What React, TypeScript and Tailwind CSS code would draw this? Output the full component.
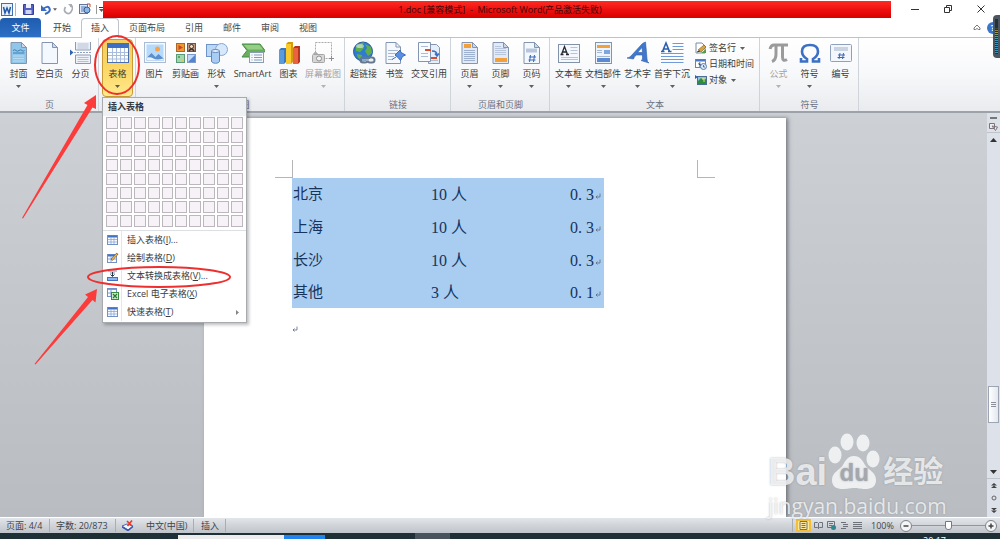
import React from 'react';
import clsx from 'clsx';

type IconProps = { children: React.ReactNode; w?: number; h?: number };

const Svg: React.FC<IconProps> = ({ children, w = 24, h = 24 }) => (
  <svg width={w} height={h} viewBox={`0 0 ${w} ${h}`} fill="none" aria-hidden="true" className="shrink-0">
    {children}
  </svg>
);

/* Blank sheet with a folded corner, shared by many icons */
const Sheet: React.FC<{ fill?: string }> = ({ fill = '#f3f8fe' }) => (
  <>
    <path d="M4 1.5h10.5l5 5V22.500H4z" fill={fill} stroke="#8495b2" />
    <path d="M14.500 1.500v5h5z" fill="#cbd8ea" stroke="#8495b2" strokeLinejoin="round" />
  </>
);

const CoverIcon = () => (
  <Svg>
    <Sheet fill="#8fc6ea" />
    <path d="M6 15h11M6 17.500h11M6 20h11" stroke="#b9dcf3" />
    <path d="M6 9.500q2-1.500 3 0t3 0 3 0 2.500 0M6 12h11.500" stroke="#3f7fb5" />
  </Svg>
);

const BlankIcon = () => (
  <Svg>
    <Sheet />
  </Svg>
);

const BreakIcon = () => (
  <Svg>
    <path d="M6.500 1v8h15V1" fill="#eef2f8" stroke="#8c9ab2" />
    <path d="M6.500 22.500V14h15v8.500z" fill="#eef2f8" stroke="#8c9ab2" />
    <path d="M8.500 3h11M8.500 5h11M8.500 7h11M8.500 16.500h11M8.500 18.500h11M8.500 20.500h11" stroke="#b4c0d4" />
    <path d="M5 11.500h18" stroke="#8aa0c8" strokeDasharray="2 1" />
    <path d="M1 8.500l3.500 3L1 14.500z" fill="#2f62b5" />
  </Svg>
);

const TableIcon = () => (
  <Svg>
    <rect x="1.500" y="2.500" width="21" height="19" fill="#fbfdff" stroke="#4a6fae" />
    <rect x="2" y="3" width="20" height="4" fill="#3f6fc4" />
    <path d="M2 11.500h20M2 14.500h20M2 18h20M6.500 7v14M10.500 7v14M14.500 7v14M18.500 7v14" stroke="#a9bcdc" />
  </Svg>
);

const PictureIcon = () => (
  <Svg>
    <rect x="1.500" y="1.500" width="21" height="20" fill="#f4f9ff" stroke="#a9bcd4" />
    <rect x="3.500" y="3.500" width="17" height="16" fill="#b6dafa" />
    <circle cx="14.500" cy="8" r="2.500" fill="#f6a44c" />
    <path d="M3.500 17l5-5 4 4 3-3 5 4.500v2h-17z" fill="#5d8fce" />
    <path d="M3.500 19.500v-3q4-1 7 1t10 0v2z" fill="#e9f3fd" />
  </Svg>
);

const ClipArtIcon = () => (
  <Svg>
    <rect x="2.500" y="2.500" width="8" height="8" fill="#f09a2e" stroke="#b0662a" />
    <path d="M4.500 4l4.500 2.500-4.500 2.500z" fill="#c8432a" />
    <rect x="13.500" y="2.500" width="8" height="8" fill="#b99a84" stroke="#6a564b" />
    <circle cx="17.500" cy="5.500" r="2" fill="#f6d9bf" stroke="#3d302a" />
    <path d="M15 10q2.500-4 5 0" stroke="#3d302a" strokeWidth="1.500" />
    <rect x="2.500" y="13.500" width="8" height="8" fill="#a5d6b0" stroke="#5b9a76" />
    <circle cx="5" cy="16" r="1" fill="#3a9848" />
    <circle cx="8" cy="19" r="1" fill="#e8ce44" />
    <rect x="13.500" y="13.500" width="8" height="8" fill="#c2d9f8" stroke="#7c99cb" />
    <path d="M14 21l7-7v7z" fill="#5483cf" />
  </Svg>
);

const ShapesIcon = () => (
  <Svg>
    <rect x="1.500" y="3.500" width="12" height="12" fill="#bad7f5" stroke="#6f94c8" />
    <circle cx="16.500" cy="8.500" r="6" fill="#d7e8fa" stroke="#86a5d0" />
    <path d="M6.500 10v10c0 3 8 3 8 0V10" fill="#a9ccf2" stroke="#5f86c0" />
    <ellipse cx="10.500" cy="10" rx="4" ry="1.500" fill="#e6f1fd" stroke="#5f86c0" />
  </Svg>
);

const SmartArtIcon = () => (
  <Svg>
    <path d="M1 3h18l5 6.500-4 6.500H1l5-6.500z" fill="#68b05e" stroke="#4b8b48" />
    <path d="M3 4h15.500l3.500 4.500H7z" fill="#94cf84" />
    <rect x="8.500" y="11.500" width="14" height="10" fill="#f7fafd" stroke="#8b9bb0" />
    <path d="M10.500 14h1M13 14h8M10.500 16.500h1M13 16.500h8M10.500 19h1M13 19h8" stroke="#7f9cbd" />
  </Svg>
);

const ChartIcon = () => (
  <Svg>
    <path d="M2 9l2-2h5v14l-2 2H2z" fill="#3979c0" />
    <path d="M2 9h5v14H2z" fill="#5a9bdd" />
    <path d="M9 3l2-2h5v20l-2 2H9z" fill="#d49a10" />
    <path d="M9 3h5v20H9z" fill="#fac92d" />
    <path d="M16 7l2-2h5v16l-2 2h-5z" fill="#b9341c" />
    <path d="M16 7h5v16h-5z" fill="#ea6340" />
  </Svg>
);

const ScreenshotIcon = () => (
  <Svg>
    <rect x="4.500" y="1.500" width="16" height="16" stroke="#aaa" strokeDasharray="2 1" />
    <rect x="1.500" y="13.500" width="12" height="8" rx="1" fill="#d6d6d6" stroke="#a5a5a5" />
    <circle cx="8" cy="17.500" r="2.500" fill="#f4f4f4" stroke="#8d8d8d" />
    <path d="M3 13v-1h3v1M18 17.500h5M20.500 15v5" stroke="#8d8d8d" />
  </Svg>
);

const LinkIcon = () => (
  <Svg>
    <circle cx="11" cy="10.500" r="9.500" fill="#2f7bd0" stroke="#245a9c" />
    <path d="M4 6q4-5 8-4.500L10 5l2 2-4 4-4-1zM13 3l6 3 1 6-4 3-3-5 2-3zM5 13l5 1-1 5q-4-2-4-6z" fill="#5fb04c" />
    <ellipse cx="8" cy="5" rx="4" ry="2" fill="#fff" opacity=".5" />
    <rect x="8.500" y="16.500" width="7" height="5" rx="2.500" stroke="#66788f" strokeWidth="2" />
    <rect x="15.500" y="16.500" width="7" height="5" rx="2.500" stroke="#66788f" strokeWidth="2" />
    <path d="M10 19h11" stroke="#d9e2ec" />
  </Svg>
);

const BookmarkIcon = () => (
  <Svg>
    <path d="M3 1.500h10l4.500 4.500v16.500H3z" fill="#f5f9fe" stroke="#8495b2" />
    <path d="M13 1.500V6h4.500" stroke="#8495b2" />
    <path d="M5 9.500h10M5 12.500h8M5 15.500h6M5 18.500h5" stroke="#a9b9d2" />
    <path d="M9 18.500l4-2.500M12 14l5-5 1 2.500 4.500 2.500-3 1.500-2 4-2-2.500z" fill="#5b8fdf" stroke="#3a6cbf" />
  </Svg>
);

const CrossRefIcon = () => (
  <Svg>
    <path d="M11.500 3.500h8l3 3v16h-11z" fill="#e6eef9" stroke="#8495b2" />
    <path d="M1.500 1.500h12v19h-12z" fill="#f8fbff" stroke="#8495b2" />
    <path d="M4 5.500h7M4 12.500h7M4 15.500h7M14 19.500h7" stroke="#aebcd4" />
    <path d="M8 9h6M14 17h6" stroke="#dd4b28" strokeWidth="2" />
    <path d="M15 10q5 0 5 4M18 12.500l2 2.500 2-2.500" stroke="#3a6fc4" strokeWidth="1.500" />
  </Svg>
);

const HeaderIcon = () => (
  <Svg>
    <Sheet fill="#e1eaf6" />
    <rect x="6" y="3" width="7" height="4" fill="#f2a13a" />
    <path d="M6 9.500h11M6 11.500h11M6 13.500h11M6 15.500h11M6 17.500h11M6 19.500h11" stroke="#9db0ce" />
  </Svg>
);

const FooterIcon = () => (
  <Svg>
    <Sheet fill="#e1eaf6" />
    <path d="M6 5.500h6M6 7.500h11M6 9.500h11M6 11.500h11M6 13.500h11" stroke="#b7c5dd" />
    <rect x="6" y="17" width="12" height="4" fill="#f2a13a" />
  </Svg>
);

const PageNumberIcon = () => (
  <Svg>
    <Sheet />
    <path d="M6 8.500h11M6 10.500h11" stroke="#b7c5dd" strokeWidth="2" />
    <path d="M10.500 14l-1 7M14.500 14l-1 7M9 16h7M8.500 19h7" stroke="#3c69b5" />
  </Svg>
);

const TextBoxIcon = () => (
  <Svg>
    <rect x="1.500" y="3.500" width="21" height="18" fill="#f5f9fd" stroke="#8292a8" />
    <path d="M13.500 6.500h7M13.500 9.500h7M13.500 12.500h7M4 16.500h17M4 18.500h17" stroke="#b4c4da" />
    <path d="M4.500 13.500l3-8 3 8M5.500 11h4M3.500 13.500h3M9 13.500h3" stroke="#24292f" strokeWidth="1.300" />
  </Svg>
);

const QuickPartsIcon = () => (
  <Svg>
    <rect x="4.500" y="1.500" width="16" height="21" fill="#eef4fb" stroke="#8495b2" />
    <rect x="6" y="4" width="13" height="3" fill="#f2a13a" />
    <rect x="13" y="9" width="6" height="4" fill="#7ea5df" />
    <path d="M6 9.500h5M6 11.500h5M6 15.500h13" stroke="#a5b7d3" />
    <rect x="6" y="17" width="13" height="4" fill="#5c8ad2" />
  </Svg>
);

const WordArtIcon = () => (
  <Svg>
    <path
      d="M19.500 1q1 10 1.500 17 0 3 2 4l-8-2.500q2-.5 1.500-3V14h-6q-3 2-3 4l-6.500-1q2 0 4-2L16 3q1-1 3.500-2zM16 6.500l-4.500 5h5z"
      fill="#3f79cf"
      fillRule="evenodd"
      stroke="#2c5ba8"
      strokeWidth=".6"
    />
  </Svg>
);

const DropCapIcon = () => (
  <Svg>
    <path d="M12.500 2.500h11M12.500 5.500h11M12.500 8.500h11M1 12.500h22.500M1 15.500h22.500M1 18.500h22.500M1 21.500h22.500" stroke="#7099d8" />
    <path d="M2.500 10.500L6 2l3.500 8.500M3.500 8h5M1 10.500h3.500M8 10.500h3.500" stroke="#2c5fae" strokeWidth="1.600" />
  </Svg>
);

const PiIcon = () => (
  <Svg>
    <path d="M3 8q1-4 4-4h14M9 4v9q0 6-4 7.500M15.500 4v12q0 5 4.500 2.500" stroke="#9b9b9b" strokeWidth="3" />
  </Svg>
);

const OmegaIcon = () => (
  <Svg>
    <path
      d="M3 17v3.500h6V18q-5-3-5-7.500Q4 4 12 4t8 6.500Q20 15 15 18v2.500h6V17"
      stroke="#3c70c4"
      strokeWidth="2.600"
    />
  </Svg>
);

const NumberIcon = () => (
  <Svg>
    <rect x="1.500" y="3.500" width="21" height="17" rx="1" fill="#f3f7fc" stroke="#8fa1bd" />
    <rect x="5" y="6" width="14" height="4" fill="#c9d3e2" />
    <path d="M11 12l-1 6M14.500 12l-1 6M9 14h7M8.500 16.500h7" stroke="#3c69b5" />
  </Svg>
);

const SignatureIcon = () => (
  <Svg w={12} h={12}>
    <path d="M1 1h6l3 3v7H1z" fill="#fff" stroke="#7d8ca5" />
    <path d="M3 8l6-5 2 2-5 5z" fill="#dba53e" stroke="#6d5626" strokeWidth=".6" />
    <path d="M6 11h5V7z" fill="#559a4b" />
    <path d="M2 10l3-1" stroke="#333" />
  </Svg>
);

const DateIcon = () => (
  <Svg w={12} h={12}>
    <rect x=".5" y="1.500" width="10" height="8" fill="#fff" stroke="#5d86c6" />
    <path d="M1 2.500h9" stroke="#4b79c4" strokeWidth="2" />
    <path d="M5.500 5H4v1.500h1.500V8H4" stroke="#27456f" />
    <circle cx="8.500" cy="8.500" r="3" fill="#dbe8f8" stroke="#587cb3" />
    <path d="M8.500 7v2h1.500" stroke="#27456f" strokeWidth=".7" />
  </Svg>
);

const ObjectIcon = () => (
  <Svg w={12} h={12}>
    <rect x="2.500" y="2.500" width="9" height="8" fill="#8bc0ea" stroke="#4c6d93" />
    <path d="M3 10V7l3-3 2 2 3-1v5z" fill="#2f8c3b" />
    <path d="M0 1l3 2-3 2z" fill="#2f5fb5" />
    <path d="M7 5l2-1v4" stroke="#d8e36a" />
  </Svg>
);

const SmallTable = () => (
  <Svg w={12} h={12}>
    <rect x=".5" y="1.500" width="10" height="9" fill="#f8fbff" stroke="#7391c7" />
    <path d="M1 2.500h9" stroke="#4273c5" strokeWidth="2" />
    <path d="M1 5.500h9M1 8h9M4 3v7M7 3v7" stroke="#8ca8d8" strokeWidth=".8" />
  </Svg>
);

const DrawTable = () => (
  <Svg w={12} h={12}>
    <rect x=".5" y="2.500" width="9" height="8" fill="#f8fbff" stroke="#7391c7" />
    <path d="M1 3.500h8" stroke="#4273c5" strokeWidth="2" />
    <path d="M1 7h8M4 4v6" stroke="#8ca8d8" />
    <path d="M4.500 8l6-6.500" stroke="#7c5a1e" strokeWidth="2.400" />
    <path d="M5 7.500l5-5.500" stroke="#f0bd53" strokeWidth="1.200" />
  </Svg>
);

const ConvertTable = () => (
  <Svg w={12} h={12}>
    <path d="M1 1h9M3 3h5" stroke="#7d93b8" />
    <path d="M5.500 2v4M3.500 4.500l2 2 2-2" stroke="#26364f" />
    <rect x=".5" y="7.500" width="10" height="3" fill="#8fb5ee" stroke="#4273c5" />
  </Svg>
);

const ExcelTable = () => (
  <Svg w={12} h={12}>
    <rect x=".5" y=".5" width="9" height="8" fill="#f8fbff" stroke="#7391c7" />
    <path d="M1 1.500h8M1 5h8M4 2v6" stroke="#7f9dd2" />
    <rect x="4.500" y="4.500" width="7" height="7" fill="#cdeccb" stroke="#3c8a42" />
    <path d="M6 6l4 4M10 6l-4 4" stroke="#257a2e" strokeWidth="1.200" />
  </Svg>
);

const Caret: React.FC<{ className?: string }> = ({ className }) => (
  <svg width="5" height="3" viewBox="0 0 5 3" aria-hidden="true" className={className}>
    <path d="M0 0h5L2.500 3z" fill="currentColor" fillOpacity=".8" />
  </svg>
);

type ToolProps = {
  label: string;
  icon: React.ReactNode;
  caret?: boolean;
  wide?: boolean;
  disabled?: boolean;
  active?: boolean;
};

const Tool: React.FC<ToolProps> = ({ label, icon, caret, wide, disabled, active }) => (
  <button
    type="button"
    disabled={disabled}
    className={clsx(
      'flex h-[58px] shrink-0 flex-col items-center rounded-sm border pt-px whitespace-nowrap',
      label === 'SmartArt' ? 'w-[41px]' : wide ? 'w-[38px]' : 'w-[31px]',
      active ? 'border-[#c79a36] bg-gradient-to-b from-[#f3cd62] via-[#fbd766] to-[#ffe98a]' : 'border-transparent',
      disabled ? 'text-[#a3a3a3]' : 'text-[#3b3b3b]'
    )}
  >
    {icon}
    <span className="mt-[2px] leading-[14px]">{label}</span>
    {caret && <Caret className="mt-1" />}
  </button>
);

const Group: React.FC<{ label?: string; children: React.ReactNode }> = ({ label, children }) => (
  <section className="relative flex flex-col border-r border-[#cfd4db] pt-px pr-[2px] pl-[3px]">
    <div className="flex">{children}</div>
    {label && <h2 className="mt-px text-center leading-[14px] text-[#6b7183]">{label}</h2>}
  </section>
);

const menuItems = [
  { text: '插入表格', hotkey: 'I', tail: '...', icon: <SmallTable /> },
  { text: '绘制表格', hotkey: 'D', tail: '', icon: <DrawTable /> },
  { text: '文本转换成表格', hotkey: 'V', tail: '...', icon: <ConvertTable /> },
  { text: 'Excel 电子表格', hotkey: 'X', tail: '', icon: <ExcelTable /> },
  { text: '快速表格', hotkey: 'T', tail: '', icon: <SmallTable />, more: true },
];

const TableMenu = () => (
  <div className="absolute top-[59px] left-[3px] z-20 w-[145px] border border-[#a7abb0] bg-white pb-px text-[#3b3b3b] shadow-[2px_2px_3px_rgba(0,0,0,0.25)]">
    <h3 className="bg-[#eff1f5] pl-[5px] leading-[18px] font-bold text-[#33373d]">插入表格</h3>
    <div className="grid grid-cols-10 gap-[2px] px-[3px] pt-px pb-[3px]">
      {Array.from({ length: 80 }, (_, i) => (
        <div key={i} className="h-3 border border-[#bbb7bd] bg-[#f6f2f8]" />
      ))}
    </div>
    <ul className="border-t border-[#dcdfe3]">
      {menuItems.map((item) => (
        <li key={item.text}>
          <button type="button" className="flex h-[18px] w-full items-center text-left whitespace-nowrap">
            <span className="flex h-full w-[19px] items-center border-r border-[#e4e6e9] pl-1">{item.icon}</span>
            <span className="flex-1 pl-[5px]">
              {item.text}(<u>{item.hotkey}</u>){item.tail}
            </span>
            {item.more && <Caret className="mr-[6px] -rotate-90 text-[#666]" />}
          </button>
        </li>
      ))}
    </ul>
  </div>
);

const TitleBar = () => (
  <header className="flex h-[18px] shrink-0 bg-white">
    <div className="flex w-[103px] shrink-0 items-center gap-[6px] pl-px">
      <span className="mr-px border-r border-[#b5b5b5] pr-px">
        <Svg w={13} h={13}>
          <rect x=".5" y=".5" width="11" height="12" fill="#e8f1fc" stroke="#3f6fb5" />
          <path d="M2.500 4l1.500 6 2-5 2 5 1.500-6" stroke="#2458a6" strokeWidth="1.500" />
        </Svg>
      </span>
      <button type="button" aria-label="保存">
        <Svg w={11} h={12}>
          <path d="M.5 1.500h10v10H.5z" fill="#5560c4" stroke="#383f93" />
          <path d="M3 1h5v4H3z" fill="#f0f3fb" />
          <path d="M2.500 7h6v4h-6z" fill="#cfd6ee" />
        </Svg>
      </button>
      <button type="button" aria-label="撤消" className="flex items-center gap-[2px] text-[#333]">
        <Svg w={11} h={11}>
          <path d="M3 5q5-4 6.500-.5T5 10" stroke="#3a6ac4" strokeWidth="2" />
          <path d="M1 1v6h6z" fill="#3a6ac4" />
        </Svg>
        <Caret className="w-1" />
      </button>
      <button type="button" aria-label="恢复">
        <Svg w={10} h={11}>
          <path d="M2.500 3Q0 7 3.500 9T9 6 7 2.500" stroke="#a9adb3" strokeWidth="1.700" />
          <path d="M5 0h4v4z" fill="#a9adb3" />
        </Svg>
      </button>
      <button type="button" aria-label="查找">
        <Svg w={12} h={12}>
          <rect x=".5" y="1.500" width="8" height="9" fill="#dce8f7" stroke="#64779a" />
          <path d="M2 4h5M2 6h4M2 8h3" stroke="#5279bb" />
          <circle cx="8" cy="7" r="3" fill="#8bb6e8" stroke="#3a5f94" />
          <path d="M8 1h3v3" stroke="#c04a3a" />
        </Svg>
      </button>
      <button type="button" aria-label="自定义" className="-ml-px border-l border-[#999] py-[2px] pl-[2px] text-[#333]">
        <span className="mb-px block h-px w-[5px] bg-[#333]" />
        <Caret />
      </button>
    </div>
    <h1 className="mt-px flex-1 bg-gradient-to-b from-[#ff2a22] via-[#ee1010] to-[#d80000] pl-[6px] text-center leading-[17px] whitespace-pre text-[#3d0505]">
      1.doc [兼容模式]  -  Microsoft Word(产品激活失败)
    </h1>
    <div className="flex w-[109px] shrink-0 items-center justify-between pr-[14px] pl-[19px] text-[#333]">
      <button type="button" aria-label="最小化">
        <Svg w={10} h={10}>
          <path d="M1 5.500h8" stroke="currentColor" />
        </Svg>
      </button>
      <button type="button" aria-label="还原">
        <Svg w={10} h={10}>
          <path d="M1.500 3.500h5v5h-5zM3.500 3V1.500h5v5H7" stroke="currentColor" />
        </Svg>
      </button>
      <button type="button" aria-label="关闭">
        <Svg w={10} h={10}>
          <path d="M1.500 1.500l7 7M8.500 1.500l-7 7" stroke="currentColor" />
        </Svg>
      </button>
    </div>
  </header>
);

const tabs = ['开始', '插入', '页面布局', '引用', '邮件', '审阅', '视图'];

const Tabs = () => (
  <nav className="flex h-5 shrink-0 border-b border-[#bcc3cc] bg-white leading-[20px] text-[#444]">
    <button type="button" className="mr-[2px] w-[41px] rounded-t-sm bg-gradient-to-b from-[#1f5cae] to-[#2c6fc6] text-white">
      文件
    </button>
    {tabs.map((tab) => (
      <button
        key={tab}
        type="button"
        className={clsx(
          'border-x px-[9px]',
          tab === '插入' ? '-mb-px rounded-t-sm border-t border-[#bcc3cc] bg-white pb-[2px] leading-[17px]' : 'border-transparent'
        )}
      >
        {tab}
      </button>
    ))}
    <div className="ml-auto flex items-center gap-[6px] pr-px">
      <button type="button" aria-label="功能区最小化">
        <Svg w={8} h={7}>
          <path d="M1 4l3-3 3 3v1.500H5.500L4 4.500 2.500 5.500H1z" stroke="#555" strokeWidth=".8" />
        </Svg>
      </button>
      <button type="button" aria-label="帮助" className="size-3 rounded-full bg-[#3b76c8] text-[9px] leading-3 font-bold text-white">
        ?
      </button>
    </div>
  </nav>
);

const Ribbon = () => (
  <div className="relative z-10 flex h-[75px] shrink-0 border-b-2 border-[#9da2a9] bg-gradient-to-b from-white via-[#f7f8fa] to-[#e9ebee]">
    <Group label="页">
      <Tool label="封面" icon={<CoverIcon />} caret />
      <Tool label="空白页" icon={<BlankIcon />} />
      <Tool label="分页" icon={<BreakIcon />} />
    </Group>
    <Group>
      <Tool label="表格" icon={<TableIcon />} caret active />
      <TableMenu />
    </Group>
    <Group label="插图">
      <Tool label="图片" icon={<PictureIcon />} />
      <Tool label="剪贴画" icon={<ClipArtIcon />} />
      <Tool label="形状" icon={<ShapesIcon />} caret />
      <Tool label="SmartArt" icon={<SmartArtIcon />} />
      <Tool label="图表" icon={<ChartIcon />} />
      <Tool label="屏幕截图" icon={<ScreenshotIcon />} caret wide disabled />
    </Group>
    <Group label="链接">
      <Tool label="超链接" icon={<LinkIcon />} />
      <Tool label="书签" icon={<BookmarkIcon />} />
      <Tool label="交叉引用" icon={<CrossRefIcon />} wide />
    </Group>
    <Group label="页眉和页脚">
      <Tool label="页眉" icon={<HeaderIcon />} caret />
      <Tool label="页脚" icon={<FooterIcon />} caret />
      <Tool label="页码" icon={<PageNumberIcon />} caret />
    </Group>
    <Group label="文本">
      <Tool label="文本框" icon={<TextBoxIcon />} caret />
      <Tool label="文档部件" icon={<QuickPartsIcon />} caret wide />
      <Tool label="艺术字" icon={<WordArtIcon />} caret />
      <Tool label="首字下沉" icon={<DropCapIcon />} caret wide />
      <div className="flex w-[66px] flex-col pt-px pl-[4px] whitespace-nowrap text-[#3b3b3b]">
        <button type="button" className="flex h-4 items-center gap-[2px]">
          <SignatureIcon />
          签名行
          <Caret className="ml-[2px]" />
        </button>
        <button type="button" className="flex h-4 items-center gap-[2px]">
          <DateIcon />
          日期和时间
        </button>
        <button type="button" className="flex h-4 items-center gap-[2px]">
          <ObjectIcon />
          对象
          <Caret className="ml-[2px]" />
        </button>
      </div>
    </Group>
    <Group label="符号">
      <Tool label="公式" icon={<PiIcon />} caret disabled />
      <Tool label="符号" icon={<OmegaIcon />} caret />
      <Tool label="编号" icon={<NumberIcon />} />
    </Group>
  </div>
);

const rows = [
  ['北京', '10 人', '0. 3'],
  ['上海', '10 人', '0. 3'],
  ['长沙', '10 人', '0. 3'],
  ['其他', '3 人', '0. 1'],
];

const ReturnMark: React.FC<{ className?: string }> = ({ className }) => (
  <svg width="6" height="7" viewBox="0 0 6 7" fill="none" aria-hidden="true" className={className}>
    <path d="M5 .5v3.500H1M2.500 2.500L1 4l1.500 1.500" stroke="#5c6b80" strokeWidth=".8" />
  </svg>
);

const Page = () => (
  <main className="mt-[5px] w-[582px] bg-white px-[71px] pt-[42px] shadow-[2px_0_4px_rgba(60,65,72,0.6)]">
    {/* Margin corner marks */}
    <div className="flex h-[18px] justify-between">
      <span className="w-[18px] border-r border-b border-[#b5b5b5]" />
      <span className="w-[18px] border-b border-l border-[#b5b5b5]" />
    </div>
    <table className="ml-[17px] w-[312px] table-fixed bg-[#a9cdf1] font-['Liberation_Serif','Noto_Sans_CJK_SC',serif] text-[16px] text-[#17345c]">
      <tbody>
        {rows.map(([city, count, rate]) => (
          <tr key={city} className="h-[33px] last:h-[31px]">
            <td className="w-[139px] p-0 pl-px text-[15px]">{city}</td>
            <td className="w-[139px] p-0">{count}</td>
            <td className="p-0">
              <span className="flex items-center">
                {rate}
                <ReturnMark className="mt-1 ml-px" />
              </span>
            </td>
          </tr>
        ))}
      </tbody>
    </table>
    <ReturnMark className="mt-[18px] ml-[17px]" />
  </main>
);

const ScrollBar = () => (
  <aside className="flex w-[13px] shrink-0 flex-col items-center bg-[#dce1ea] text-[#555]">
    <div className="flex w-full flex-col items-center gap-[3px] border-b border-[#bfc4cc] pt-1 pb-px">
      <span className="h-[2px] w-[7px] bg-[#777]" />
      <Svg w={9} h={9}>
        <path d="M.5 1.500h5v5h-5zM3 4l5.500 1-2 3.500z" fill="#eee" stroke="#7d7478" />
      </Svg>
    </div>
    <button type="button" aria-label="向上滚动" className="py-[5px] text-[#333]">
      <Svg w={7} h={4}>
        <path d="M0 4l3.500-4L7 4z" fill="currentColor" />
      </Svg>
    </button>
    <div className="flex-[244]" />
    <div className="flex h-[37px] w-[11px] flex-col items-center justify-center gap-px border border-[#9da5b3] bg-gradient-to-r from-white to-[#e3e7ef]">
      <span className="h-px w-[5px] bg-[#8b909a]" />
      <span className="h-px w-[5px] bg-[#8b909a]" />
      <span className="h-px w-[5px] bg-[#8b909a]" />
    </div>
    <div className="flex-[44]" />
    <button type="button" aria-label="向下滚动" className="py-1 text-[#333]">
      <Svg w={7} h={4}>
        <path d="M0 0h7L3.500 4z" fill="currentColor" />
      </Svg>
    </button>
    <div className="flex w-full flex-col items-center gap-[7px] border-t border-[#bfc4cc] pt-1 pb-1">
      <button type="button" aria-label="前一页">
        <Svg w={6} h={5}>
          <path d="M0 2.500L3 0l3 2.500zM0 5l3-2.500L6 5z" fill="#444" />
        </Svg>
      </button>
      <button type="button" aria-label="选择浏览对象">
        <Svg w={6} h={6}>
          <circle cx="3" cy="3" r="2" stroke="#666" />
        </Svg>
      </button>
      <button type="button" aria-label="下一页">
        <Svg w={6} h={5}>
          <path d="M0 0h6L3 2.500zM0 2.500h6L3 5z" fill="#444" />
        </Svg>
      </button>
    </div>
  </aside>
);

const ViewIcon: React.FC<{ d: string }> = ({ d }) => (
  <Svg w={9} h={9}>
    <path d={d} stroke="#6d727a" />
  </Svg>
);

const StatusBar = () => (
  <footer className="flex h-4 shrink-0 items-center border-t border-white bg-gradient-to-b from-[#e2e5e9] to-[#bfc4ca] whitespace-nowrap text-[#3f444b]">
    <span className="w-[50px] border-r border-[#a9aeb5] pl-[6px]">页面: 4/4</span>
    <span className="w-[66px] border-r border-[#a9aeb5] pl-[6px]">字数: 20/873</span>
    <span className="flex w-[78px] items-center gap-[12px] border-r border-[#a9aeb5] pl-[6px]">
      <Svg w={12} h={11}>
        <path d="M0 6l5-2 6 2-5 4z" fill="#f4f7fd" stroke="#4968b4" />
        <path d="M0 7l6 3.500 5-4" stroke="#3858ae" strokeWidth="1.500" />
        <path d="M5 1l5 5M10 .5L5.500 6" stroke="#e23a2c" strokeWidth="1.600" />
      </Svg>
      中文(中国)
    </span>
    <span className="w-8 border-r border-[#a9aeb5] pl-[7px]">插入</span>
    <div className="ml-auto flex items-center border-l border-[#a9aeb5] pl-[3px]">
      <button type="button" aria-label="页面视图" className="border-2 border-[#f0bf3c] bg-[#ffe79b] px-px">
        <ViewIcon d="M1 .500h7v8H1zM2.500 2.500h4M2.500 4.500h4M2.500 6.500h4" />
      </button>
      <div className="flex gap-[4px] px-[3px]">
        <button type="button" aria-label="阅读版式">
          <ViewIcon d="M.5 1.500h3l1 1 1-1h3v5h-3l-1 1-1-1h-3zM4.500 2v6" />
        </button>
        <button type="button" aria-label="Web 版式">
          <Svg w={9} h={9}>
            <path d="M.5.5h7v6h-7zM2 2.500h4M2 4.500h3" stroke="#6d727a" />
            <circle cx="6.500" cy="6.500" r="2.500" fill="#2d8792" />
          </Svg>
        </button>
        <button type="button" aria-label="大纲视图">
          <ViewIcon d="M1 1.500h5M3 3.500h5M3 5.500h5M1 7.500h5" />
        </button>
        <button type="button" aria-label="草稿">
          <ViewIcon d="M0 1.500h9M0 3.500h9M0 5.500h9M0 7.500h9" />
        </button>
      </div>
      <label htmlFor="zoom" className="w-[35px] pl-[6px]">
        100%
      </label>
      <button type="button" aria-label="缩小">
        <Svg w={12} h={12}>
          <circle cx="6" cy="6" r="5.500" fill="#f4f5f7" stroke="#7d838b" />
          <path d="M3.500 6h5" stroke="#444" strokeWidth="1.500" />
        </Svg>
      </button>
      <input
        id="zoom"
        type="range"
        min="0"
        max="100"
        defaultValue="50"
        className="h-[10px] w-[73px] appearance-none bg-[linear-gradient(#9096a0,#9096a0)] bg-[length:100%_1px] bg-center bg-no-repeat [&::-webkit-slider-thumb]:h-[9px] [&::-webkit-slider-thumb]:w-[7px] [&::-webkit-slider-thumb]:appearance-none [&::-webkit-slider-thumb]:rounded-b-[3px] [&::-webkit-slider-thumb]:border [&::-webkit-slider-thumb]:border-[#737983] [&::-webkit-slider-thumb]:bg-white"
      />
      <button type="button" aria-label="放大" className="mr-[3px]">
        <Svg w={12} h={12}>
          <circle cx="6" cy="6" r="5.500" fill="#f4f5f7" stroke="#7d838b" />
          <path d="M3.500 6h5M6 3.500v5" stroke="#444" strokeWidth="1.500" />
        </Svg>
      </button>
    </div>
  </footer>
);

const TaskBar = () => (
  <div className="flex h-[6px] shrink-0 overflow-hidden bg-[#1f2f36] text-white">
    <span className="mt-[2px] ml-[178px] w-[106px] bg-[#ececec]" />
    <span className="mt-[2px] w-[41px] bg-[#1f83f0]" />
    <span className="ml-[90px] w-[35px] bg-[#47545b]" />
    <time className="mr-[54px] ml-auto leading-[15px]">20:17</time>
  </div>
);

const Watermark = () => (
  <div className="pointer-events-none absolute right-[54px] bottom-[20px] z-10 w-[178px] whitespace-nowrap text-white/75 [text-shadow:0_0_2px_rgba(120,125,132,0.6)]">
    <div className="mb-[3px] flex h-[60px] items-end">
      <span className="font-['Liberation_Sans',sans-serif] text-[38px] leading-[36px] font-bold">Bai</span>
      <div className="relative mx-px h-[58px] w-[52px] shrink-0">
        <svg width="52" height="58" viewBox="0 0 52 58" fill="#fff" fillOpacity=".75" aria-hidden="true">
          <ellipse cx="7" cy="23" rx="6.500" ry="8.500" />
          <ellipse cx="19" cy="10" rx="6.500" ry="8.500" />
          <ellipse cx="35" cy="11" rx="6.500" ry="8.500" />
          <ellipse cx="45" cy="27" rx="6.500" ry="8.500" />
          <path d="M26 24c6 0 9 5 11 9 3 5 11 7 11 15 0 7-5 9-11 9-5 0-7-1-11-1s-6 1-11 1C9 57 4 55 4 48c0-8 8-10 11-15 2-4 5-9 11-9z" />
        </svg>
        <span className="absolute inset-x-0 bottom-[4px] text-center font-['Liberation_Sans',sans-serif] text-[24px] leading-[26px] font-bold text-[#a4a8ae]">
          du
        </span>
      </div>
      <span className="ml-[2px] text-[30px] leading-[38px] font-bold">经验</span>
    </div>
    <div className="text-[21px] leading-[26px]">jingyan.baidu.com</div>
  </div>
);

/* Hand-drawn red marks pointing at the two clicks */
const Annotations = () => (
  <svg width="240" height="380" viewBox="0 0 240 380" fill="none" aria-hidden="true" className="pointer-events-none absolute top-0 left-0 z-30">
    <ellipse cx="117" cy="65" rx="22" ry="29" stroke="#ee2f2f" strokeWidth="2" />
    <ellipse cx="159" cy="277" rx="71" ry="10" stroke="#ee2f2f" strokeWidth="2" />
    <path d="M96 95l0 14-3.500-1.500L23 218.500l-1-.5L87.500 105l-3.500-2z" fill="#fc3b3b" />
    <path d="M97 289l-1.500 13.500-3-2.500L35.500 364.500l-1-.5L88 297l-3-2.500z" fill="#fc3b3b" />
  </svg>
);

const App: React.FC = () => (
  <div className="relative flex h-screen flex-col overflow-hidden font-['Open_Sans','Noto_Sans_CJK_SC',sans-serif] text-[9px]">
    <TitleBar />
    <Tabs />
    <Ribbon />
    <div className="flex min-h-0 flex-1 bg-gradient-to-b from-[#cdd1d6] to-[#b9bdc2]">
      <div className="flex flex-1 justify-center overflow-hidden pl-[3px]">
        <Page />
      </div>
      <ScrollBar />
    </div>
    <StatusBar />
    <TaskBar />
    <Watermark />
    <Annotations />
    {/* Floating level meter docked to the screen edge */}
    <div className="absolute top-[15px] right-0 z-30 flex h-[43px] w-[7px] justify-center rounded-l-sm bg-[#4b5661] py-1">
      <div className="w-[3px] bg-[repeating-linear-gradient(#26303a_0_1px,transparent_1px_2px),linear-gradient(#26303a_25%,#b59a35_35%,#2f9bc4_60%)]" />
    </div>
  </div>
);

export default App;
